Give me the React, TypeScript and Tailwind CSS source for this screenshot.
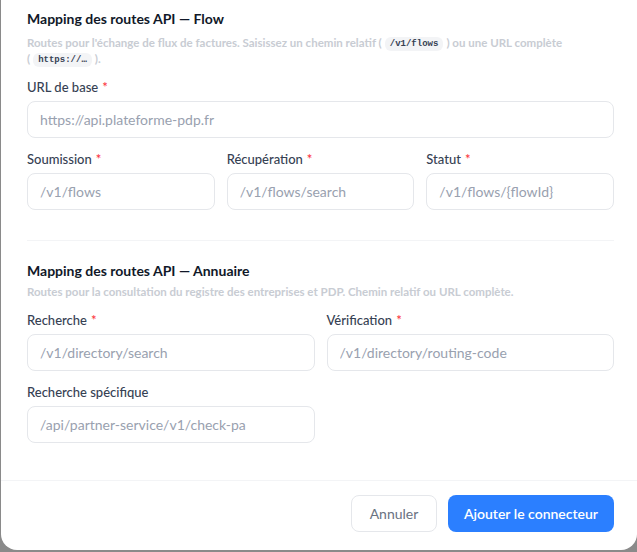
function Label({ children, required }: { children: string; required?: boolean }) {
  return (
    <label className="block text-[13px] leading-4 font-medium text-gray-700">
      {children}
      {required && <span className="ml-1 text-red-500">*</span>}
    </label>
  );
}

function Field({
  label,
  placeholder,
  required,
}: {
  label: string;
  placeholder: string;
  required?: boolean;
}) {
  return (
    <div className="flex flex-col gap-[6px]">
      <Label required={required}>{label}</Label>
      <input
        placeholder={placeholder}
        className="h-[37px] w-full rounded-lg border border-gray-200 bg-white px-3 text-[14px] text-gray-700 outline-none placeholder:text-gray-400"
      />
    </div>
  );
}

function Code({ children }: { children: string }) {
  return (
    <code className="mx-[3px] inline-block rounded-md bg-gray-100 px-[5px] py-[2px] align-[1px] font-['Liberation_Mono',monospace] text-[9px] leading-[10px] font-semibold text-gray-700">
      {children}
    </code>
  );
}

export default function App() {
  return (
    <div className="h-[552px] w-[637px] overflow-hidden bg-[#8a8a8a] pl-[1px] font-['Lato',sans-serif]">
      <div className="flex h-[550px] flex-col rounded-b-2xl bg-white">
        <div className="flex-1 pt-[9px] pl-[26px] pr-[23px]">
          <section>
            <h2 className="text-[14px] leading-5 font-bold text-gray-900">Mapping des routes API — Flow</h2>
            <p className="mt-[6px] text-[11.5px] leading-4 font-bold text-[#c8ccd3]">
              Routes pour l'échange de flux de factures. Saisissez un chemin relatif{" "}
              <span className="whitespace-nowrap">
                (<Code>/v1/flows</Code>)
              </span>{" "}
              ou une URL complète{" "}
              <span className="whitespace-nowrap">
                (<Code>https://…</Code>).
              </span>
            </p>
            <div className="mt-[12px]">
              <Field label="URL de base" placeholder="https://api.plateforme-pdp.fr" required />
            </div>
            <div className="mt-[13px] grid grid-cols-3 gap-3">
              <Field label="Soumission" placeholder="/v1/flows" required />
              <Field label="Récupération" placeholder="/v1/flows/search" required />
              <Field label="Statut" placeholder="/v1/flows/{flowId}" required />
            </div>
          </section>

          <div className="mt-[30px] border-t border-gray-100" />

          <section className="mt-[20px]">
            <h2 className="text-[14px] leading-5 font-bold text-gray-900">Mapping des routes API — Annuaire</h2>
            <p className="mt-[3px] text-[11.5px] leading-4 font-bold text-[#c8ccd3]">
              Routes pour la consultation du registre des entreprises et PDP. Chemin relatif ou URL complète.
            </p>
            <div className="mt-3 grid grid-cols-2 gap-x-3 gap-y-[13px]">
              <Field label="Recherche" placeholder="/v1/directory/search" required />
              <Field label="Vérification" placeholder="/v1/directory/routing-code" required />
              <Field label="Recherche spécifique" placeholder="/api/partner-service/v1/check-pa" />
            </div>
          </section>
        </div>

        <div className="flex h-[70px] items-start justify-end gap-[11px] border-t border-gray-100 pt-[14px] pr-[23px]">
          <button className="h-[37px] w-[86px] rounded-lg border border-gray-200 bg-white text-[14px] text-gray-500">
            Annuler
          </button>
          <button className="h-[37px] w-[166px] rounded-lg bg-blue-500 text-[14px] font-semibold text-white">
            Ajouter le connecteur
          </button>
        </div>
      </div>
    </div>
  );
}
